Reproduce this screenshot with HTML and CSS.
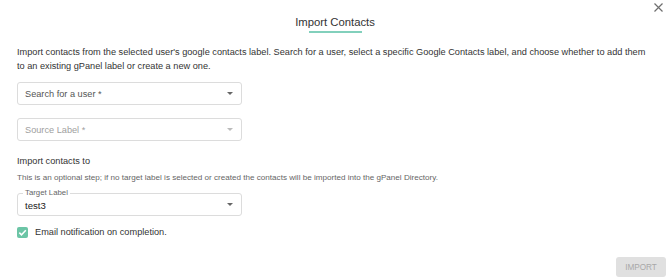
FILE: index.html
```html
<!DOCTYPE html>
<html>
<head>
<meta charset="utf-8">
<link rel="stylesheet" href="styles.css">
</head>
<body>
<div class="dialog">
  <button class="close" aria-label="Close">
    <svg width="9" height="9" viewBox="0 0 9 9"><path d="M0.5 0.5L8.5 8.5M8.5 0.5L0.5 8.5" stroke="#6f6f6f" stroke-width="1.2" fill="none"/></svg>
  </button>
  <div class="header">
    <h1 class="title">Import Contacts</h1>
    <div class="underline"></div>
  </div>
  <p class="intro">Import contacts from the selected user's google contacts label. Search for a user, select a specific Google Contacts label, and choose whether to add them to an existing gPanel label or create a new one.</p>
  <div class="field first">
    <span class="placeholder">Search for a user *</span>
    <span class="arrow"></span>
  </div>
  <div class="field disabled">
    <span class="placeholder">Source Label *</span>
    <span class="arrow"></span>
  </div>
  <h2 class="section">Import contacts to</h2>
  <p class="hint">This is an optional step; if no target label is selected or created the contacts will be imported into the gPanel Directory.</p>
  <div class="field outlined">
    <span class="legend">Target Label</span>
    <span class="value">test3</span>
    <span class="arrow"></span>
  </div>
  <label class="check">
    <span class="box">
      <svg width="9" height="9" viewBox="0 0 9 9"><path d="M1.3 4.6L3.5 6.8L7.8 2.2" stroke="#fff" stroke-width="1.5" fill="none"/></svg>
    </span>
    <span>Email notification on completion.</span>
  </label>
  <div class="actions">
    <button class="import" disabled>IMPORT</button>
  </div>
</div>
</body>
</html>
```
FILE: styles.css
```css
* { box-sizing: border-box; }
html, body { margin: 0; padding: 0; background: #fff; }
body {
  font-family: "Liberation Sans", Arial, sans-serif;
  color: #333;
  width: 670px;
  height: 278px;
  overflow: hidden;
}
.dialog {
  position: relative;
  display: flex;
  flex-direction: column;
  padding: 15px 17px 1px 17px;
  height: 278px;
}
.close {
  position: absolute;
  top: 3px;
  right: 7px;
  border: 0;
  background: none;
  padding: 0;
  width: 9px;
  height: 9px;
  display: flex;
}
.header {
  display: flex;
  flex-direction: column;
  align-items: center;
}
.title {
  margin: 0;
  font-size: 11.3px;
  font-weight: normal;
  line-height: 14px;
  color: #333;
}
.underline {
  width: 53px;
  height: 2px;
  background: #82d0bc;
  margin-top: 2px;
}
.intro {
  margin: 12px 0 0 0;
  font-size: 9.2px;
  line-height: 14px;
  color: #333;
}
.field {
  position: relative;
  width: 225px;
  height: 23px;
  border: 1px solid #dcdcdc;
  border-radius: 3px;
  display: flex;
  align-items: center;
  padding: 0 8px 0 7px;
  margin-top: 13px;
  font-size: 9.2px;
}
.field.first { margin-top: 9px; }
.placeholder { color: #555; flex: 1; }
.disabled .placeholder { color: #a0a0a0; }
.arrow {
  width: 0;
  height: 0;
  border-left: 3px solid transparent;
  border-right: 3px solid transparent;
  border-top: 3px solid #666;
}
.disabled .arrow { border-top-color: #bbb; }
.section {
  margin: 13px 0 0 0;
  font-size: 9.2px;
  font-weight: normal;
  line-height: 14px;
  color: #333;
}
.hint {
  margin: 4px 0 0 0;
  font-size: 8.1px;
  line-height: 12px;
  color: #666;
}
.field.outlined { margin-top: 9px; }
.legend {
  position: absolute;
  top: -6px;
  left: 5px;
  padding: 0 2px;
  background: #fff;
  font-size: 7.8px;
  line-height: 10px;
  color: #666;
}
.value { flex: 1; color: #222; font-size: 9.6px; margin-top: 1px; }
.check {
  display: flex;
  align-items: center;
  gap: 7px;
  margin-top: 9px;
  height: 14px;
  font-size: 9.2px;
  color: #333;
}
.box {
  width: 11px;
  height: 11px;
  border-radius: 2px;
  background: #6cc5a6;
  display: flex;
  align-items: center;
  justify-content: center;
}
.actions {
  margin-top: auto;
  display: flex;
  justify-content: flex-end;
  margin-right: -13px;
}
.import {
  width: 50px;
  height: 20px;
  border: 0;
  border-radius: 3px;
  background: #e0e0e0;
  color: #a8a8a8;
  font-family: "Liberation Sans", Arial, sans-serif;
  font-size: 8.2px;
  padding: 0;
}
```
